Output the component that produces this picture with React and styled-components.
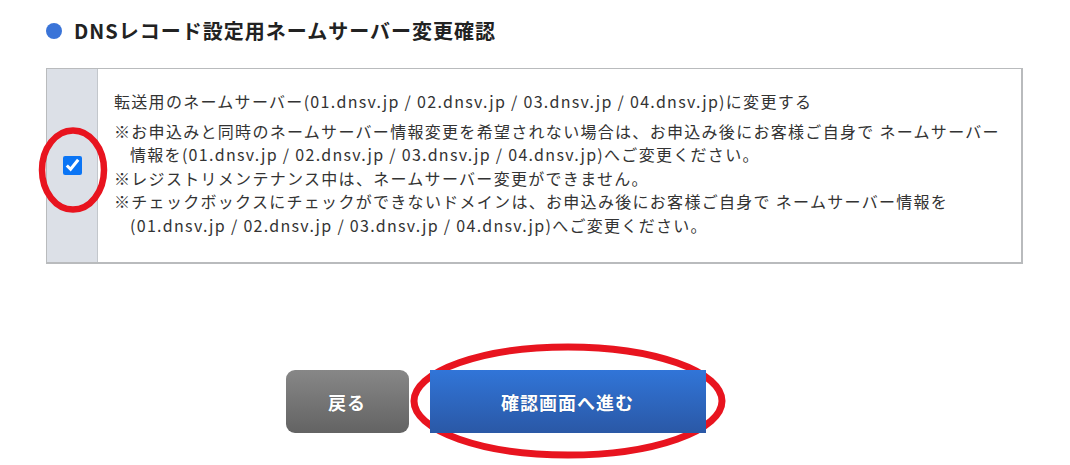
import React from "react";
import styled, { createGlobalStyle } from "styled-components";

const Global = createGlobalStyle`
  html, body { margin: 0; padding: 0; background: #fff; }
  body {
    font-family: "Noto Sans CJK JP", "Noto Sans", sans-serif;
    color: #333;
  }
`;

const Page = styled.div`
  width: 1070px;
  height: 465px;
  padding: 0 47px 0 46px;
  box-sizing: border-box;
  overflow: hidden;
`;

const Heading = styled.h2`
  margin: 0 0 23px;
  padding-top: 17px;
  display: flex;
  align-items: center;
  gap: 12px;
  font-size: 20px;
  font-weight: 700;
  letter-spacing: 1px;
  color: #222;
  line-height: 28px;
`;

const Dot = styled.span`
  width: 16px;
  height: 16px;
  border-radius: 50%;
  background: #3a74d8;
  flex: none;
`;

const Box = styled.div`
  display: flex;
  border-style: solid;
  border-color: #b9bbbd;
  border-width: 1px 2px 2px 1px;
  height: 196px;
  box-sizing: border-box;
`;

const CheckCell = styled.div`
  position: relative;
  width: 50px;
  flex: none;
  background: #dce0e7;
  border-right: 1px solid #c3c7cc;
  display: flex;
  align-items: center;
  justify-content: center;
`;

const Check = styled.input`
  width: 19px;
  height: 19px;
  margin: 0 0 0 1px;
  accent-color: #0b75f5;
`;

const Ring = styled.svg`
  position: absolute;
  pointer-events: none;
  overflow: visible;
  z-index: ${(p) => (p.$behind ? -1 : 1)};
`;

const Body = styled.div`
  flex: 1;
  padding: 21px 16px 0 16px;
  font-size: 16px;
  line-height: 23.5px;
  letter-spacing: 1.3px;
  color: #333;
`;

const Lead = styled.p`
  margin: 0 0 6px;
`;

const Notes = styled.ul`
  list-style: none;
  margin: 0;
  padding: 0;
`;

const Note = styled.li`
  padding-left: 1em;
  text-indent: -1em;
`;

const Actions = styled.div`
  position: relative;
  z-index: 0;
  display: flex;
  justify-content: center;
  gap: 21px;
  padding-top: 106px;
  padding-right: 78px;
`;

const Button = styled.button`
  position: relative;
  height: 63px;
  border: none;
  color: #fff;
  font-family: "Noto Sans CJK JP", sans-serif;
  font-weight: 700;
  font-size: 18px;
  letter-spacing: 1px;
  cursor: pointer;
  width: ${(p) => (p.$primary ? "276px" : "123px")};
  border-radius: ${(p) => (p.$primary ? "0" : "9px")};
  background: ${(p) =>
    p.$primary
      ? "linear-gradient(#3175d8, #2a58a6)"
      : "linear-gradient(#878787, #636363)"};
  text-shadow: 0 0 1px rgba(0,0,0,0.3);
`;

export default function App() {
  return (
    <Page>
      <Global />
      <Heading>
        <Dot />
        DNSレコード設定用ネームサーバー変更確認
      </Heading>
      <Box>
        <CheckCell>
          <Check type="checkbox" checked readOnly />
          <Ring
            width="76"
            height="90"
            viewBox="0 0 76 90"
            style={{ left: -12, top: 56 }}
          >
            <ellipse cx="38" cy="45" rx="31" ry="39.5" fill="none" stroke="#e8141f" strokeWidth="6.5" />
          </Ring>
        </CheckCell>
        <Body>
          <Lead>
            転送用のネームサーバー(01.dnsv.jp / 02.dnsv.jp / 03.dnsv.jp / 04.dnsv.jp)に変更する
          </Lead>
          <Notes>
            <Note>
              ※お申込みと同時のネームサーバー情報変更を希望されない場合は、お申込み後にお客様ご自身で ネームサーバー情報を(01.dnsv.jp / 02.dnsv.jp / 03.dnsv.jp / 04.dnsv.jp)へご変更ください。
            </Note>
            <Note>※レジストリメンテナンス中は、ネームサーバー変更ができません。</Note>
            <Note>
              ※チェックボックスにチェックができないドメインは、お申込み後にお客様ご自身で ネームサーバー情報を(01.dnsv.jp / 02.dnsv.jp / 03.dnsv.jp / 04.dnsv.jp)へご変更ください。
            </Note>
          </Notes>
        </Body>
      </Box>
      <Actions>
        <Button>戻る</Button>
        <Button $primary>
          確認画面へ進む
          <Ring
            $behind
            width="320"
            height="118"
            viewBox="0 0 320 118"
            style={{ left: -22, top: -28 }}
          >
            <ellipse cx="160" cy="59" rx="154" ry="54" fill="none" stroke="#e8141f" strokeWidth="7" />
          </Ring>
        </Button>
      </Actions>
    </Page>
  );
}
